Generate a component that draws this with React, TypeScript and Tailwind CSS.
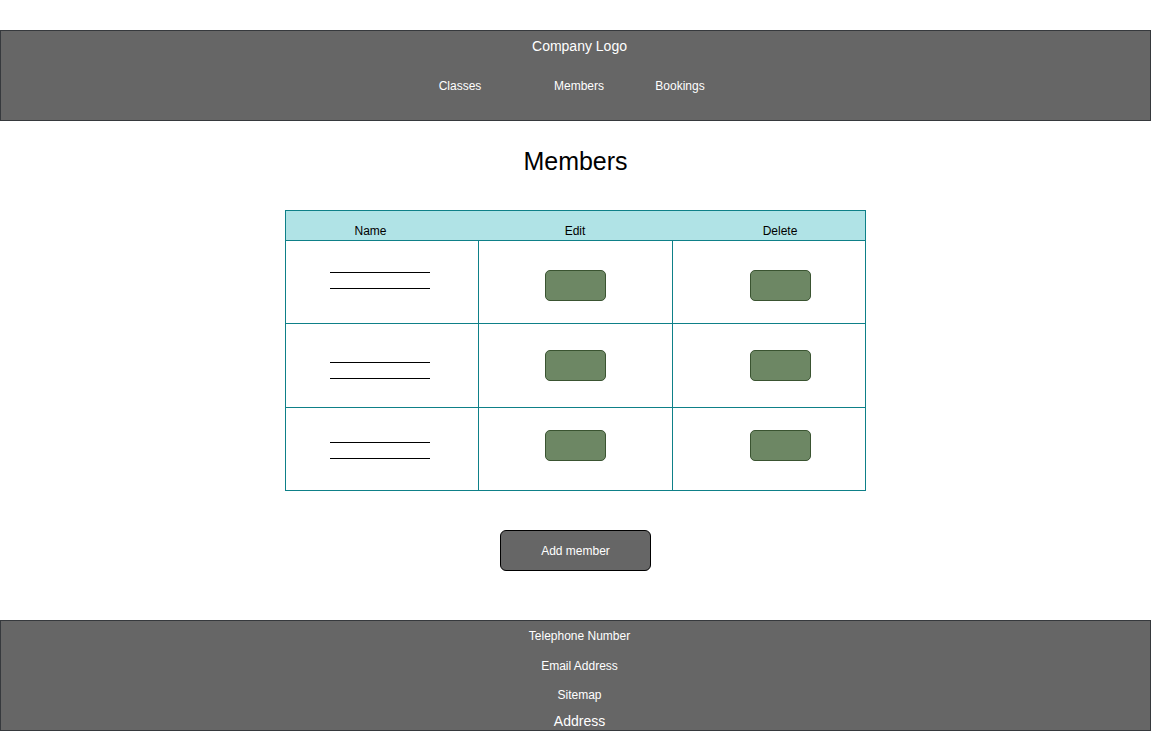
import React from 'react';

const rows = [
    { lineTop: 'pt-[31px]', btnTop: 'pt-[29px]' },
    { lineTop: 'pt-[38px]', btnTop: 'pt-[26px]' },
    { lineTop: 'pt-[34px]', btnTop: 'pt-[22px]' },
];

const GreenButton: React.FC = () => (
    <div className="w-[61px] h-[31px] rounded-[5px] bg-[#6d8764] border border-[#3a5431]"></div>
);

const App: React.FC = () => {
    return (
        <div className="w-[1151px] h-[731px] bg-white pt-[30px] font-['Liberation_Sans',Arial,sans-serif] overflow-hidden">
            {/* Header */}
            <header className="h-[91px] bg-[#666666] border border-[#36393d] text-white">
                <div className="pt-[7px] pl-[8px] text-center text-[14px] leading-[16px]">Company Logo</div>
                <nav className="mt-[25px] flex text-[12px] leading-[14px]">
                    <span className="ml-[409px] w-[100px] text-center">Classes</span>
                    <span className="ml-[19px] w-[100px] text-center">Members</span>
                    <span className="ml-[1px] w-[100px] text-center">Bookings</span>
                </nav>
            </header>

            <h1 className="mt-[26px] text-center text-[25px] leading-[28px] text-black">Members</h1>

            {/* Members table */}
            <div className="mt-[35px] mx-auto w-[581px] border border-[#0e8088] text-black">
                <div className="h-[29px] bg-[#b0e3e6] grid grid-cols-[169px_240px_170px] text-[12px] leading-[14px] pt-[13px]">
                    <span className="text-center">Name</span>
                    <span className="text-center">Edit</span>
                    <span className="text-center">Delete</span>
                </div>
                {rows.map((row, i) => (
                    <div
                        key={i}
                        className={`grid grid-cols-[192px_194px_193px] border-t border-[#0e8088] ${i === 1 ? 'h-[84px]' : 'h-[83px]'}`}
                    >
                        <div className={row.lineTop}>
                            <div className="ml-[44px] w-[100px] h-px bg-black"></div>
                            <div className="ml-[44px] mt-[15px] w-[100px] h-px bg-black"></div>
                        </div>
                        <div className={`border-l border-[#0e8088] pl-[66px] ${row.btnTop}`}>
                            <GreenButton />
                        </div>
                        <div className={`border-l border-[#0e8088] pl-[77px] ${row.btnTop}`}>
                            <GreenButton />
                        </div>
                    </div>
                ))}
            </div>

            <div className="mt-[39px] flex justify-center">
                <button className="w-[151px] h-[41px] rounded-[6px] bg-[#666666] border border-black text-white text-[12px] leading-[14px]">
                    Add member
                </button>
            </div>

            {/* Footer */}
            <footer className="mt-[49px] h-[111px] bg-[#666666] border border-[#36393d] text-white pl-[8px] text-center">
                <div className="pt-[8px] text-[12px] leading-[14px]">Telephone Number</div>
                <div className="mt-[16px] text-[12px] leading-[14px]">Email Address</div>
                <div className="mt-[15px] text-[12px] leading-[14px]">Sitemap</div>
                <div className="mt-[11px] text-[14px] leading-[16px]">Address</div>
            </footer>
        </div>
    );
};

export default App;
